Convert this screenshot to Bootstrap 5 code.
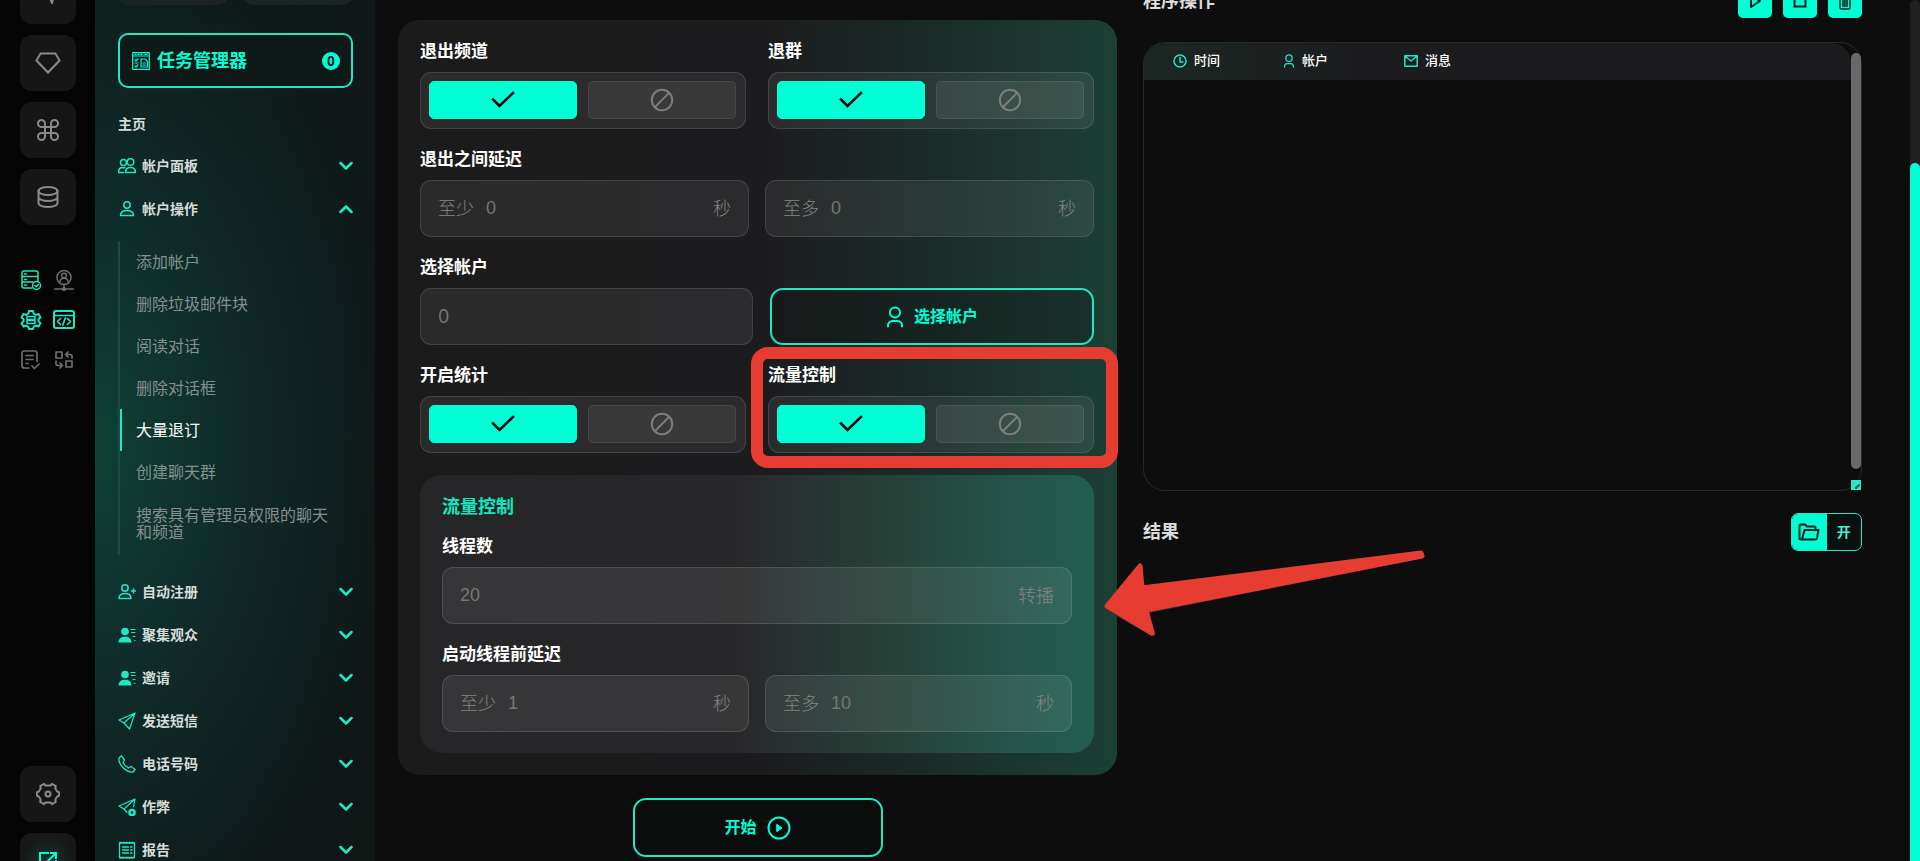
<!DOCTYPE html>
<html lang="zh-CN">
<head>
<meta charset="utf-8">
<meta name="viewport" content="width=device-width, initial-scale=1">
<title>任务管理器</title>
<link href="https://cdn.jsdelivr.net/npm/bootstrap@5.3.0/dist/css/bootstrap.min.css" rel="stylesheet">
<style>
:root{--mint:#00ffd5;--mint-line:#1fe8c2}
body{background:#0d0d0e;color:#fff;font-family:"Liberation Sans","Noto Sans CJK SC",sans-serif;font-size:16px;line-height:20px}
svg{display:block;flex:none;fill:none;stroke:currentColor;stroke-width:2;stroke-linecap:round;stroke-linejoin:round}
button{font-family:inherit}
.app{height:100vh;overflow:hidden}

/* icon rail */
.rail{width:95px;background:#050506;padding:0 19px 0 20px;flex:none}
.rail-top{margin-top:-32px}
.rail-end{margin-bottom:-28px}
.rail-stack{display:flex;flex-direction:column;gap:11px}
.rail-btn{width:56px;height:56px;border:0;border-radius:12px;background:#161617;color:#8a8a8a;display:flex;align-items:center;justify-content:center;padding:0}
.rail-btn.glow{color:var(--mint);background:radial-gradient(circle,#12352f,#171718 65%)}
.rail-mini{display:grid;grid-template-columns:22px 22px;gap:18px 11px;margin-top:44px}
.rail-mini button{padding:0;border:0;background:none;color:#6f6f70}
.rail-mini button.on{color:var(--mint-line)}

/* side menu */
.side{width:280px;flex:none;padding:0 22px 0 23px;overflow:hidden;
 background:radial-gradient(ellipse 300px 520px at 0 52%,#0f4034 0,rgba(15,50,48,.75) 45%,rgba(15,34,36,0) 100%),linear-gradient(100deg,#0e1c17,#101719 70%,#0f1614)}
.tiles{display:flex;gap:15px;margin-top:-35px}
.tiles span{flex:1;height:40px;border-radius:10px;background:#1b2422}
.task-btn{display:flex;align-items:center;width:100%;height:55px;margin-top:28px;padding:0 11px 0 12px;border:2px solid var(--mint-line);border-radius:10px;background:#0f1a18;color:var(--mint);font-size:18px;font-weight:700;gap:7px}
.count{width:18px;height:18px;border-radius:50%;background:var(--mint);color:#0b1a17;font:700 14px/18px "Liberation Sans",sans-serif;text-align:center;margin-left:auto}
.home{display:block;margin-top:21px;height:30px;line-height:30px;font-size:14px;font-weight:700;color:#d5dcda;text-decoration:none}
.menu-row{display:flex;align-items:center;width:100%;height:43px;padding:0;border:0;background:none;color:#d5dcda;font-size:14px;font-weight:700;gap:6px}
.menu-row svg:first-child{color:var(--mint-line);stroke-width:1.5}
.menu-row .chev{margin-left:auto;color:var(--mint-line)}
.menu-rows{margin-top:5px}
.sub{list-style:none;margin:11px 0 15px;padding:0;border-left:2px solid #1d4a42}
.sub a{display:flex;align-items:center;height:42px;padding:0 20px 0 14px;border-left:2px solid transparent;color:#83908e;text-decoration:none;line-height:17px}
.sub li:last-child a{height:62px}
.sub a.active{border-color:var(--mint-line);color:#fff}

/* work area */
.work{flex:1;min-width:0;display:flex;gap:26px;padding:20px 48px 0 23px}
.work>*{flex:1 1 0;min-width:0}
.form-panel{border-radius:22px;padding:22px 23px 22px 22px;background:linear-gradient(90deg,#1b1b1c 0,#1c1b1d 50%,#1b2b28 74%,#1b4036 100%)}
.pair{display:grid;grid-template-columns:1fr 1fr;column-gap:22px}
.pair.near{column-gap:16px}
.pair.acc{grid-template-columns:333fr 324fr;column-gap:17px}
.grp{margin-bottom:21px}
.cap{display:block;font-size:17px;font-weight:700;line-height:20px;margin:0 0 10px}
.box{display:flex;align-items:center;height:57px;border:1px solid rgba(255,255,255,.12);border-radius:11px;background:rgba(255,255,255,.065);padding:0 17px;font-size:18px;color:#858585}
.box label{margin:0 12px 0 0;flex:none;font-weight:300}
.box span{flex:none;font-weight:300}
.box input{flex:1;min-width:0;width:0;border:0;padding:0;background:none;outline:0;color:#757575;height:40px}
.box input::placeholder{color:#757575;opacity:1}
.round-num{font-family:Inter,sans-serif}
.toggle{padding:8px 9px 9px 8px;gap:11px}
.toggle .btn{flex:1;height:38px;margin:0;padding:0;display:flex;align-items:center;justify-content:center;border-radius:5px;border:1px solid rgba(255,255,255,.08);background:rgba(255,255,255,.07);color:#7d7d7d}
.toggle .btn-check:checked+.btn{background:var(--mint);border-color:var(--mint);color:#000}
.line-btn{display:flex;align-items:center;justify-content:center;gap:10px;border:2px solid var(--mint-line);border-radius:13px;background:rgba(8,14,12,.25);color:var(--mint);font-weight:700;font-size:16px}
.pick{width:100%;height:57px;margin-top:30px}
.start{width:250px;height:59px;margin:23px auto 0}
.flow-panel{position:relative;margin-top:22px;border-radius:22px;padding:22px 22px 21px;background:linear-gradient(90deg,#262628 0,#272628 46%,#283331 57%,#254339 71%,#24544a 88%,#225f51 100%)}
.flow-panel h2{font-size:18px;line-height:20px;font-weight:700;color:#13e6bd;margin:0 0 20px}
.flow-panel .box{background:rgba(255,255,255,.075)}
.marked{position:relative}
.marked::after{content:"";position:absolute;inset:-19px -24px -15px -17px;border:12px solid #e63c32;border-radius:17px;z-index:2;pointer-events:none}
.pointer{position:absolute;left:calc(100% + 9px);top:74px;z-index:3;stroke-width:5}

/* log and results */
.log-col{margin-top:-20px}
.head-row{display:flex;align-items:center;justify-content:space-between;height:34px;margin-top:-16px}
.head-row h2,.res-row h2{font-size:18px;line-height:24px;font-weight:700;margin:0;color:#dcdcdc}
.acts{display:flex;gap:11px}
.acts button{width:34px;height:34px;border:0;border-radius:5px;padding:0;background:var(--mint);color:#06241e;display:flex;align-items:center;justify-content:center}
.log{position:relative;height:449px;margin-top:24px;border:1px solid #29292b;border-radius:22px;padding-right:10px}
.log-clip{border-radius:21px 20px 0 0;overflow:hidden}
.log table{width:100%;border-collapse:collapse;table-layout:fixed}
.log th{height:37px;padding:0 0 2px;font-size:13px;font-weight:500}
.log th>div{display:flex;align-items:center;gap:7px}
.log thead{background:linear-gradient(90deg,#1c2723,#1c1c1e 30%)}
.log th svg{color:var(--mint-line)}
.log-bar{position:absolute;right:0;top:10px;width:10px;height:416px;border-radius:5px;background:#69696b}
.grip{position:absolute;right:0;bottom:0;width:10px;height:10px;background:#2fe6c4;color:#0b5a4c}
.res-row{display:flex;align-items:center;justify-content:space-between;margin-top:22px;height:38px}
.open-btn{display:flex;width:71px;height:38px;padding:0;border:1px solid var(--mint-line);border-radius:7px;background:#0b1110;color:#4deccb;overflow:hidden;font-size:14px;font-weight:700}
.open-btn span{display:flex;align-items:center;justify-content:center;height:100%;flex:1}
.open-btn span:first-child{background:var(--mint);color:#06241e}
.page-bar{width:10px;flex:none;background:#202022;border-radius:5px 5px 0 0;padding-top:163px}
.page-bar div{height:100%;background:var(--mint);border-radius:5px 5px 0 0}
</style>
</head>
<body>
<svg width="0" height="0" class="position-absolute">
 <defs>
  <symbol id="down" viewBox="0 0 14 10"><path d="M1.5 2 7 7.500 12.500 2" stroke-width="2.500"/></symbol>
  <symbol id="tick" viewBox="0 0 24 18"><path d="M2 8.500 8.500 15 22 2" stroke-width="2.500" stroke-linecap="square" stroke-linejoin="miter"/></symbol>
  <symbol id="ban" viewBox="0 0 24 24"><circle cx="12" cy="12" r="10.200"/><path d="M5 19 19 5"/></symbol>
  <symbol id="person" viewBox="0 0 18 22"><circle cx="9" cy="6.500" r="5"/><path d="M2 20.500v-1a4.500 4.500 0 0 1 4.500-4.500h5a4.500 4.500 0 0 1 4.500 4.500v1"/></symbol>
  <symbol id="people-list" viewBox="0 0 18 18"><g fill="currentColor" stroke="none"><circle cx="7" cy="5.500" r="3.800"/><path d="M.5 16.500c0-4 2.500-5.800 6.500-5.800s6.500 1.800 6.500 5.800z"/></g><path d="M13 3.500h4M13.500 6.500H17M15 10.500h2M16.500 14.500h.5" stroke-width="1.200"/></symbol>
 </defs>
</svg>
<div class="app d-flex">
 <nav class="rail d-flex flex-column" aria-label="工具">
  <div class="rail-stack rail-top">
   <button class="rail-btn" aria-label="下载"><svg width="26" height="30" viewBox="0 0 26 30"><path d="M13 2v12M14 14l3 8 2-8" stroke-width="2"/></svg></button>
   <button class="rail-btn" aria-label="高级"><svg width="26" height="22" viewBox="0 0 26 22"><path d="M5.500 1.500h15l4 7L13 20.500 1.500 8.500z" stroke-linejoin="miter"/></svg></button>
   <button class="rail-btn" aria-label="命令"><svg width="24" height="24" viewBox="0 0 24 24"><path d="M9 9H6a3.500 3.500 0 1 1 3-3.500V18.500A3.500 3.500 0 1 1 5.500 15h13a3.500 3.500 0 1 1-3.500 3.500V5.500A3.500 3.500 0 1 1 18.500 9H8"/></svg></button>
   <button class="rail-btn" aria-label="数据库"><svg width="24" height="24" viewBox="0 0 24 24"><ellipse cx="12" cy="6" rx="9.500" ry="4"/><path d="M2.500 6v12c0 2.200 4.200 4 9.500 4s9.500-1.800 9.500-4V6M2.500 12c0 2.200 4.200 4 9.500 4s9.500-1.800 9.500-4"/></svg></button>
  </div>
  <div class="rail-mini">
   <button class="on" aria-label="服务器"><svg width="22" height="22" viewBox="0 0 22 22"><g stroke-width="1.500"><path d="M12 19H4a2 2 0 0 1-2-2V4a2 2 0 0 1 2-2h12a2 2 0 0 1 2 2v8M2 7.500h16M2 13h11M4.500 5h2M4.500 10.500h2M4.500 16h2"/><circle cx="16.500" cy="16.500" r="4"/><path d="m14.800 16.500 1.300 1.300 2.200-2.300"/></g></svg></button>
   <button aria-label="代理"><svg width="22" height="22" viewBox="0 0 22 22"><g stroke-width="1.500"><circle cx="11" cy="8.500" r="7"/><circle cx="11" cy="6.500" r="2.300"/><path d="M7 13c0-5 8-5 8 0M11 16v3M1.500 20h19"/></g><circle cx="11" cy="20" r="1"/></svg></button>
   <button class="on" aria-label="配置"><svg width="22" height="22" viewBox="0 0 22 22"><path d="m9 2-.6 2.500-2.400 1.400L3.500 5l-2 3.500L3.500 10v2.500l-2 1.500L3.500 17.500 6 16.500l2.400 1.400L9 20h4l.6-2.100 2.400-1.400 2.500 1 2-3.500-2-1.500V10l2-1.500-2-3.500-2.500.9-2.400-1.400L13 2z"/><g stroke-width="1.500"><rect x="7" y="7.500" width="8" height="3"/><rect x="7" y="11.500" width="8" height="3"/></g></svg></button>
   <button class="on" aria-label="代码"><svg width="22" height="22" viewBox="0 0 22 22"><rect x="1" y="2" width="20" height="17" rx="2"/><path d="M1 6.500h20M7.500 9.500 4.500 12.500l3 3M14.500 9.500l3 3-3 3M12.300 9l-2.500 7" stroke-width="1.700"/></svg></button>
   <button aria-label="报告"><svg width="22" height="22" viewBox="0 0 22 22"><path d="M9 19H4.500A2.500 2.500 0 0 1 2 16.500V4a2 2 0 0 1 2-2h11a2 2 0 0 1 2 2v8.500M6 6.500h7M6 10.500h7M6 14.500h2M12 17l2.500 2.500 4.500-4.500" stroke-width="1.700"/></svg></button>
   <button aria-label="交换"><svg width="22" height="22" viewBox="0 0 22 22"><path d="M3 3h6v6H3zM13 12h6v6h-6zM3 12v2.500a2 2 0 0 0 2 2h4M7 14l2.500 2.500L7 19M19 9V7.500a2 2 0 0 0-2-2h-4M15 3l-2.500 2.500L15 8" stroke-width="1.700"/></svg></button>
  </div>
  <div class="rail-stack rail-end mt-auto">
   <button class="rail-btn" aria-label="设置"><svg width="24" height="24" viewBox="0 0 24 24"><path d="M9.500 3.500 8 1.800 4.300 4l.4 2.500L2.800 9.500.9 10.200v3.600l1.900.7 1.900 3-.4 2.500L8 22.200l1.500-1.700h5l1.500 1.700 3.700-2.200-.4-2.500 1.900-3 1.900-.7v-3.600l-1.900-.7-1.900-3 .4-2.500L16 1.800l-1.500 1.700z"/><circle cx="12" cy="12" r="2.500"/></svg></button>
   <button class="rail-btn glow" aria-label="退出"><svg width="20" height="20" viewBox="0 0 20 20"><path d="M10 2H2v16h16v-8M9 11l9-9M13 2h5v5" stroke-linecap="square" stroke-linejoin="miter"/></svg></button>
  </div>
 </nav>

 <aside class="side">
  <div class="tiles"><span></span><span></span></div>
  <button class="task-btn"><svg width="18" height="18" viewBox="0 0 18 18"><g stroke-width="1.200"><path d="M.7.700h16.600v16.600H.7zM.7 4h16.600M3 2.400h1M6 2.400h1M9 2.400h1M13 2.400h2"/><path d="m3 8 1 1 2-2M3 14l1 1 2-2M3 11h3M9 7h4l2.500 2.500V15H9zM11 11h2.500M11 13h2.500"/></g></svg><span>任务管理器</span><span class="count">0</span></button>
  <a class="home" href="#">主页</a>
  <div class="menu-rows">
   <button class="menu-row"><svg width="18" height="18" viewBox="0 0 18 18"><circle cx="5.500" cy="5.500" r="3"/><circle cx="12.500" cy="5" r="3.300"/><path d="M7.500 15.500c0-3.500 2-5 5-5s5 1.500 5 5zM5.500 15.500h-5c0-3.500 1.200-5 4-5l2.500.3"/></svg>帐户面板<svg class="chev" width="14" height="10"><use href="#down"/></svg></button>
   <button class="menu-row" aria-expanded="true"><svg width="18" height="18" viewBox="0 0 18 18"><circle cx="9" cy="5" r="3.200"/><path d="M2.500 15.500c0-3.500 2.500-5 6.500-5s6.500 1.500 6.500 5z"/></svg>帐户操作<svg class="chev" width="14" height="10" viewBox="0 0 14 10"><path d="M1.500 8 7 2.500 12.500 8" stroke-width="2.500"/></svg></button>
  </div>
  <ul class="sub">
   <li><a href="#">添加帐户</a></li>
   <li><a href="#">删除垃圾邮件块</a></li>
   <li><a href="#">阅读对话</a></li>
   <li><a href="#">删除对话框</a></li>
   <li><a href="#" class="active">大量退订</a></li>
   <li><a href="#">创建聊天群</a></li>
   <li><a href="#">搜索具有管理员权限的聊天和频道</a></li>
  </ul>
  <button class="menu-row"><svg width="18" height="18" viewBox="0 0 18 18"><circle cx="7" cy="5" r="3.200"/><path d="M1 15.500c0-3.500 2-5 6-5s6 1.500 6 5zM15.500 6v4M13.500 8h4"/></svg>自动注册<svg class="chev" width="14" height="10"><use href="#down"/></svg></button>
  <button class="menu-row"><svg width="18" height="18"><use href="#people-list"/></svg>聚集观众<svg class="chev" width="14" height="10"><use href="#down"/></svg></button>
  <button class="menu-row"><svg width="18" height="18"><use href="#people-list"/></svg>邀请<svg class="chev" width="14" height="10"><use href="#down"/></svg></button>
  <button class="menu-row"><svg width="18" height="18" viewBox="0 0 18 18"><path d="M17 1 1 8l5 3 5.500 6zM17 1 6 11" stroke-width="1.200"/></svg>发送短信<svg class="chev" width="14" height="10"><use href="#down"/></svg></button>
  <button class="menu-row"><svg width="18" height="18" viewBox="0 0 18 18"><path d="M1 3 3.500.800 6.500 5 5 7.500c1.200 2.500 3 4.200 5.500 5.500l2.500-1.500 4.200 3L15 17C8.500 18 0 9.500 1 3z" stroke-width="1.300"/></svg>电话号码<svg class="chev" width="14" height="10"><use href="#down"/></svg></button>
  <button class="menu-row"><svg width="18" height="18" viewBox="0 0 18 18"><path d="M17 1 1 8l5 3 3 3.500M17 1l-1.500 8M17 1 6 11" stroke-width="1.200"/><circle cx="14" cy="14.500" r="2.600" stroke-width="2.500"/></svg>作弊<svg class="chev" width="14" height="10"><use href="#down"/></svg></button>
  <button class="menu-row"><svg width="18" height="18" viewBox="0 0 18 18"><path d="M1.500 2h15v14.500h-15zM4.500 6h6M4.500 9h6M4.500 12h6M12.500 6h1.500M12.500 9h1.500M12.500 12h1.500" stroke-width="1.300"/><path d="M2 1.500h14M2 17h14" stroke-width="1.500" stroke-dasharray="1 2"/></svg>报告<svg class="chev" width="14" height="10"><use href="#down"/></svg></button>
 </aside>

 <main class="work">
  <form onsubmit="return false">
   <div class="form-panel">
    <div class="pair">
     <div class="grp" role="group" aria-labelledby="c1"><span class="cap" id="c1">退出频道</span>
      <div class="box toggle"><input type="radio" class="btn-check" name="chan" id="chan1" checked><label class="btn" for="chan1" aria-label="是"><svg width="24" height="18"><use href="#tick"/></svg></label><input type="radio" class="btn-check" name="chan" id="chan0"><label class="btn" for="chan0" aria-label="否"><svg width="24" height="24"><use href="#ban"/></svg></label></div></div>
     <div class="grp" role="group" aria-labelledby="c2"><span class="cap" id="c2">退群</span>
      <div class="box toggle"><input type="radio" class="btn-check" name="grp" id="grp1" checked><label class="btn" for="grp1" aria-label="是"><svg width="24" height="18"><use href="#tick"/></svg></label><input type="radio" class="btn-check" name="grp" id="grp0"><label class="btn" for="grp0" aria-label="否"><svg width="24" height="24"><use href="#ban"/></svg></label></div></div>
    </div>
    <div class="grp"><span class="cap">退出之间延迟</span>
     <div class="pair near">
      <div class="box"><label for="d1">至少</label><input id="d1" type="text" placeholder="0"><span>秒</span></div>
      <div class="box"><label for="d2">至多</label><input id="d2" type="text" placeholder="0"><span>秒</span></div>
     </div></div>
    <div class="pair acc">
     <div class="grp"><label class="cap" for="acc">选择帐户</label><div class="box"><input id="acc" class="round-num" type="text" placeholder="0"></div></div>
     <div><button type="button" class="line-btn pick"><svg width="18" height="22"><use href="#person"/></svg>选择帐户</button></div>
    </div>
    <div class="pair">
     <div role="group" aria-labelledby="c3"><span class="cap" id="c3">开启统计</span>
      <div class="box toggle"><input type="radio" class="btn-check" name="stat" id="stat1" checked><label class="btn" for="stat1" aria-label="是"><svg width="24" height="18"><use href="#tick"/></svg></label><input type="radio" class="btn-check" name="stat" id="stat0"><label class="btn" for="stat0" aria-label="否"><svg width="24" height="24"><use href="#ban"/></svg></label></div></div>
     <div class="marked" role="group" aria-labelledby="c4"><span class="cap" id="c4">流量控制</span>
      <div class="box toggle"><input type="radio" class="btn-check" name="flow" id="flow1" checked><label class="btn" for="flow1" aria-label="是"><svg width="24" height="18"><use href="#tick"/></svg></label><input type="radio" class="btn-check" name="flow" id="flow0"><label class="btn" for="flow0" aria-label="否"><svg width="24" height="24"><use href="#ban"/></svg></label></div></div>
    </div>
    <section class="flow-panel">
     <h2>流量控制</h2>
     <div class="grp"><label class="cap" for="thr">线程数</label><div class="box"><input id="thr" type="text" placeholder="20"><span>转播</span></div></div>
     <div><span class="cap">启动线程前延迟</span>
      <div class="pair near">
       <div class="box"><label for="s1">至少</label><input id="s1" type="text" placeholder="1"><span>秒</span></div>
       <div class="box"><label for="s2">至多</label><input id="s2" type="text" placeholder="10"><span>秒</span></div>
      </div></div>
     <svg class="pointer" width="324" height="90" viewBox="0 0 324 90"><path d="M5 59 37 19l2 21L317 5l1 2L43 62l7 23z" fill="#3c2d2b" stroke="#3c2d2b"/><path d="M4 57 37 17l2 22L318 4l1 3L43 61l6 23z" fill="#e63c32" stroke="#e63c32"/></svg>
    </section>
   </div>
   <button class="line-btn start">开始<svg width="24" height="24" viewBox="0 0 24 24"><circle cx="12" cy="12" r="10.500"/><path d="m10 8.500 5 3.500-5 3.500z" fill="currentColor" stroke-width="1"/></svg></button>
  </form>

  <section class="log-col">
   <div class="head-row"><h2>程序操作</h2>
    <div class="acts">
     <button aria-label="运行"><svg width="14" height="16" viewBox="0 0 14 16"><path d="m3 2 9 6-9 6z"/></svg></button>
     <button aria-label="停止"><svg width="14" height="14" viewBox="0 0 14 14"><path d="M1.500 1.500h11v11h-11z" stroke-linejoin="miter"/></svg></button>
     <button aria-label="清除"><svg width="14" height="18" viewBox="0 0 14 18"><path d="M1 4h12M4.500 4V1.500h5V4M2 4v11.500a1.500 1.500 0 0 0 1.500 1.500h7a1.500 1.500 0 0 0 1.500-1.500V4M5 7v7.500M7 7v7.500M9 7v7.500" stroke-width="1.500"/></svg></button>
    </div></div>
   <div class="log">
    <div class="log-clip"><table>
     <colgroup><col style="width:139px"><col style="width:121px"><col></colgroup>
     <thead><tr>
      <th style="padding-left:29px"><div><svg width="14" height="14" viewBox="0 0 14 14"><circle cx="7" cy="7" r="6" stroke-width="1.500"/><path d="M7 3.500V8h3" stroke-width="1.500"/></svg>时间</div></th>
      <th><div><svg width="12" height="14"><use href="#person"/></svg>帐户</div></th>
      <th><div><svg width="14" height="12" viewBox="0 0 14 12"><path d="M.8.800h12.400v10.400H.8zM1 1l6 5 6-5" stroke-width="1.500"/></svg>消息</div></th>
     </tr></thead></table></div>
    <div class="log-bar"></div>
    <div class="grip"><svg width="10" height="10" viewBox="0 0 10 10"><path d="m5 8 3-3" stroke-width="2"/></svg></div>
   </div>
   <div class="res-row"><h2>结果</h2><button class="open-btn"><span><svg width="22" height="18" viewBox="0 0 22 18"><path d="M4 16.500H3a1.500 1.500 0 0 1-1.500-1.500V3A1.500 1.500 0 0 1 3 1.500h4l2 2h7A1.500 1.500 0 0 1 17.500 5v1.500M4 16.500l2.500-9.500h14l-1.500 8a2 2 0 0 1-2 1.500z"/></svg></span><span>开</span></button></div>
  </section>
 </main>
 <div class="page-bar"><div></div></div>
</div>
<script src="https://cdn.jsdelivr.net/npm/bootstrap@5.3.0/dist/js/bootstrap.bundle.min.js"></script>
</body>
</html>
